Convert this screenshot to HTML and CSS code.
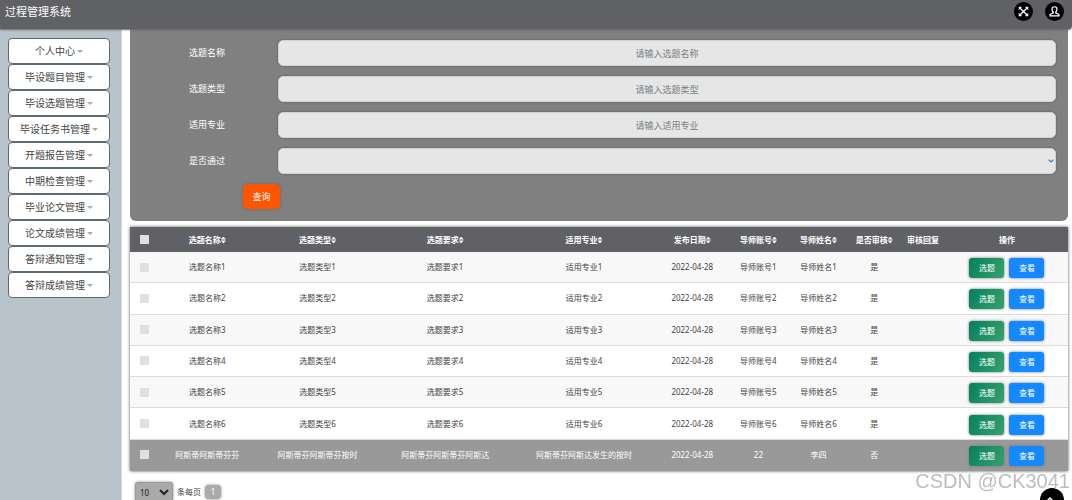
FILE: index.html
```html
<!DOCTYPE html>
<html lang="zh-CN">
<head>
<meta charset="utf-8">
<title>过程管理系统</title>
<link rel="stylesheet" href="styles.css">
</head>
<body>
<header class="topbar">
  <h1 class="brand">过程管理系统</h1>
  <div class="tools">
    <button class="round" type="button" aria-label="全屏">
      <svg viewBox="0 0 20 20"><path d="M6.500 6.500l7 7M13.500 6.500l-7 7" stroke-width="1.400"/><path d="M5.300 5.300h2.600L5.300 7.900zM14.700 5.300v2.600l-2.600-2.600zM14.700 14.700h-2.600l2.600-2.600zM5.300 14.700v-2.600l2.600 2.600z" fill="#fff" stroke-width=".6"/></svg>
    </button>
    <button class="round" type="button" aria-label="用户">
      <svg viewBox="0 0 20 20"><path d="M10 5c-1.800 0-2.600 1.200-2.600 2.700 0 1.300.5 2.300 1.300 2.900v.9l-3.400 1.700v1.500h9.400v-1.500l-3.400-1.700v-.9c.8-.6 1.300-1.600 1.300-2.900C12.600 6.200 11.800 5 10 5z" stroke-width="1.300"/></svg>
    </button>
  </div>
</header>
<div class="shell">
  <nav class="sidebar">
    <button class="item" type="button">个人中心</button>
    <button class="item" type="button">毕设题目管理</button>
    <button class="item" type="button">毕设选题管理</button>
    <button class="item" type="button">毕设任务书管理</button>
    <button class="item" type="button">开题报告管理</button>
    <button class="item" type="button">中期检查管理</button>
    <button class="item" type="button">毕业论文管理</button>
    <button class="item" type="button">论文成绩管理</button>
    <button class="item" type="button">答辩通知管理</button>
    <button class="item" type="button">答辩成绩管理</button>
  </nav>
  <main class="content">
    <form class="search">
      <div class="field"><label for="f1">选题名称</label><input id="f1" type="text" placeholder="请输入选题名称"></div>
      <div class="field"><label for="f2">选题类型</label><input id="f2" type="text" placeholder="请输入选题类型"></div>
      <div class="field"><label for="f3">适用专业</label><input id="f3" type="text" placeholder="请输入适用专业"></div>
      <div class="field"><label for="f4">是否通过</label><div class="pick"><select id="f4"><option></option><option>是</option><option>否</option></select><svg class="chev" viewBox="0 0 6 4"><path d="M.6.6L3 3 5.400.6"/></svg></div></div>
      <button class="query" type="button">查询</button>
    </form>
    <table class="grid">
      <colgroup><col class="w-check"><col class="w-name"><col class="w-type"><col class="w-req"><col class="w-major"><col class="w-date"><col class="w-acct"><col class="w-acct"><col class="w-pass"><col class="w-reply"><col class="w-ops"></colgroup>
      <thead>
        <tr><th><input type="checkbox" aria-label="全选"></th><th class="sort">选题名称</th><th class="sort">选题类型</th><th class="sort">选题要求</th><th class="sort">适用专业</th><th class="sort">发布日期</th><th class="sort">导师账号</th><th class="sort">导师姓名</th><th class="sort">是否审核</th><th>审核回复</th><th>操作</th></tr>
      </thead>
      <tbody>
        <tr><td><input type="checkbox" aria-label="选择"></td><td>选题名称1</td><td>选题类型1</td><td>选题要求1</td><td>适用专业1</td><td>2022-04-28</td><td>导师账号1</td><td>导师姓名1</td><td>是</td><td></td><td><div class="ops"><button class="act pickit" type="button">选题</button><button class="act view" type="button">查看</button></div></td></tr>
        <tr><td><input type="checkbox" aria-label="选择"></td><td>选题名称2</td><td>选题类型2</td><td>选题要求2</td><td>适用专业2</td><td>2022-04-28</td><td>导师账号2</td><td>导师姓名2</td><td>是</td><td></td><td><div class="ops"><button class="act pickit" type="button">选题</button><button class="act view" type="button">查看</button></div></td></tr>
        <tr><td><input type="checkbox" aria-label="选择"></td><td>选题名称3</td><td>选题类型3</td><td>选题要求3</td><td>适用专业3</td><td>2022-04-28</td><td>导师账号3</td><td>导师姓名3</td><td>是</td><td></td><td><div class="ops"><button class="act pickit" type="button">选题</button><button class="act view" type="button">查看</button></div></td></tr>
        <tr><td><input type="checkbox" aria-label="选择"></td><td>选题名称4</td><td>选题类型4</td><td>选题要求4</td><td>适用专业4</td><td>2022-04-28</td><td>导师账号4</td><td>导师姓名4</td><td>是</td><td></td><td><div class="ops"><button class="act pickit" type="button">选题</button><button class="act view" type="button">查看</button></div></td></tr>
        <tr><td><input type="checkbox" aria-label="选择"></td><td>选题名称5</td><td>选题类型5</td><td>选题要求5</td><td>适用专业5</td><td>2022-04-28</td><td>导师账号5</td><td>导师姓名5</td><td>是</td><td></td><td><div class="ops"><button class="act pickit" type="button">选题</button><button class="act view" type="button">查看</button></div></td></tr>
        <tr><td><input type="checkbox" aria-label="选择"></td><td>选题名称6</td><td>选题类型6</td><td>选题要求6</td><td>适用专业6</td><td>2022-04-28</td><td>导师账号6</td><td>导师姓名6</td><td>是</td><td></td><td><div class="ops"><button class="act pickit" type="button">选题</button><button class="act view" type="button">查看</button></div></td></tr>
        <tr class="hovered"><td><input type="checkbox" aria-label="选择"></td><td>阿斯蒂阿斯蒂芬芬</td><td>阿斯蒂芬阿斯蒂芬按时</td><td>阿斯蒂芬阿斯蒂芬阿斯达</td><td>阿斯蒂芬阿斯达发生的按时</td><td>2022-04-28</td><td>22</td><td>李四</td><td>否</td><td></td><td><div class="ops"><button class="act pickit" type="button">选题</button><button class="act view" type="button">查看</button></div></td></tr>
      </tbody>
    </table>
    <div class="pager">
      <select id="size" class="size"><option>10</option><option>25</option><option>50</option></select>
      <label for="size">条每页</label>
      <button class="page" type="button">1</button>
    </div>
  </main>
</div>
<button class="float" type="button" aria-label="返回顶部"><svg viewBox="0 0 24 24"><path d="M7 13l3-3 3 3M14 14h3"/></svg></button>
<div class="mark">CSDN @CK3041</div>
</body>
</html>
```
FILE: styles.css
```css
* { box-sizing: border-box; }
body {
  margin: 0;
  height: 100vh;
  overflow: hidden;
  display: flex;
  flex-direction: column;
  background: #fff;
  color: #444;
  font: 8px/12px "Noto Sans", "Noto Sans CJK SC", sans-serif;
}
button, input, select { font: inherit; margin: 0; }
button { border: 0; padding: 0; }

.topbar {
  flex: none;
  height: 29px;
  padding: 0 8px 7px 5px;
  display: flex;
  align-items: center;
  justify-content: space-between;
  background: #606165;
  border-radius: 0 0 4px 0;
  box-shadow: 0 1px 2px #666;
  position: relative;
  z-index: 1;
}
.brand { margin: 0; padding-top: 1px; color: #fff; font-size: 11px; font-weight: 400; line-height: 16px; }
.tools { display: flex; gap: 12px; }
.round { width: 19px; height: 19px; border-radius: 50%; background: #000; }
.round svg { display: block; width: 19px; height: 19px; fill: none; stroke: #fff; }

.shell { flex: 1; min-height: 0; display: flex; }
.sidebar {
  flex: none;
  width: 122px;
  padding: 9px 11px 0 8px;
  display: flex;
  flex-direction: column;
  background: #b9c3ca;
  border-right: 1px solid #d4dade;
}
.item {
  height: 26px;
  border: 1px solid #5d6b75;
  border-radius: 4px;
  background: #fff;
  color: #444;
  font-size: 10px;
  line-height: 14px;
  display: flex;
  align-items: center;
  justify-content: center;
  gap: 2px;
}
.item::after { content: ""; border: 3px solid transparent; border-top-color: #aaa; border-bottom: 0; }

.content { flex: 1; min-width: 0; padding: 0 4px 0 8px; }
.search {
  padding: 11px 12px 12px 0;
  background: #808080;
  border-radius: 0 0 6px 6px;
  display: flex;
  flex-direction: column;
  gap: 10px;
}
.field { display: flex; align-items: center; color: #fff; font-size: 9px; }
.field label { flex: none; width: 148px; padding-left: 59px; }
.field input, .field select {
  flex: 1;
  width: 100%;
  min-width: 0;
  height: 26px;
  padding: 0 8px;
  border: 1px solid #d0d0d0;
  border-radius: 5px;
  background: #e6e6e6;
  color: #555;
  text-align: center;
  box-shadow: 0 0 2px #555;
}
.field input::placeholder { color: #777f85; opacity: 1; }
.pick { flex: 1; min-width: 0; display: flex; position: relative; }
.pick select { appearance: none; }
.chev { position: absolute; right: 2px; top: 11px; width: 6px; height: 4px; fill: none; stroke: #1e7fe0; stroke-width: 1.2; }
.query {
  width: 37px;
  height: 25px;
  margin-left: 113px;
  border-radius: 5px;
  background: #ff5500;
  color: #fff;
  font-size: 9px;
  box-shadow: 0 0 3px #666;
}

.grid {
  width: 100%;
  height: 244px;
  margin-top: 6px;
  table-layout: fixed;
  border-collapse: separate;
  border-spacing: 0;
  text-align: center;
  box-shadow: 0 0 3px #555;
}
.w-check { width: 3%; }
.w-name { width: 10.5%; }
.w-type { width: 13%; }
.w-req { width: 14.2%; }
.w-major { width: 15.4%; }
.w-date { width: 7.7%; }
.w-acct { width: 6.4%; }
.w-pass { width: 5.5%; }
.w-reply { width: 4.9%; }
.w-ops { width: 13%; }
.grid th, .grid td { padding: 0; white-space: nowrap; }
.grid th { height: 25px; background: #606165; color: #fff; font-weight: 700; }
.grid td { height: 31px; border-bottom: 1px solid #dcdcdc; }
.grid tbody tr:nth-child(odd) { background: #f8f8f8; }
.grid tbody tr.hovered { background: #999; color: #fff; }
.grid .hovered td { border-bottom-color: #999; }
.grid input { appearance: none; display: block; width: 9px; height: 9px; margin: 0 auto; background: #e0e0e0; }
.sort::after {
  content: "";
  display: inline-block;
  width: 5px;
  height: 7px;
  vertical-align: -1px;
  background: #fff;
  clip-path: polygon(50% 0, 100% 43%, 0 43%, 0 57%, 100% 57%, 50% 100%, 0 57%, 0 43%);
}
.ops { display: flex; justify-content: center; gap: 5px; padding-top: 2px; }
.act { width: 35px; height: 20px; border-radius: 3px; color: #fff; box-shadow: 0 0 3px #777; }
.pickit { background: linear-gradient(120deg, #04805f, #37a16c); }
.view { background: #1488ff; }

.pager { display: flex; align-items: center; gap: 4px; padding: 11px 5px 0; }
.size { width: 38px; height: 20px; border: 1px solid #999; border-radius: 3px; background: #a9a9a9; color: #222; box-shadow: 0 0 3px #888; }
.page { width: 16px; height: 14px; border-radius: 4px; background: #aaa; color: #fff; box-shadow: 0 0 3px #888; }

.float { position: fixed; right: 8px; bottom: -12px; width: 24px; height: 24px; border-radius: 50%; background: #000; }
.float svg { display: block; width: 24px; height: 24px; fill: none; stroke: #fff; stroke-width: 1.5; }
.mark {
  position: fixed;
  right: 2px;
  bottom: 7px;
  color: #bdbdbd;
  font: 20px/24px "Liberation Sans", Arial, sans-serif;
  text-shadow: 1px 1px 0 #fff;
}
```
